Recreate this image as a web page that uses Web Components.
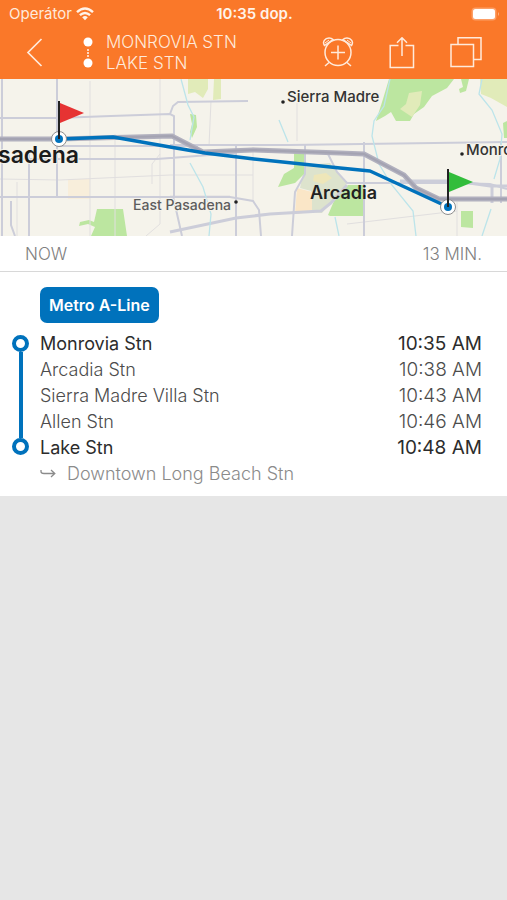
<!DOCTYPE html>
<html lang="en">
<head>
<meta charset="utf-8">
<meta name="viewport" content="width=device-width, initial-scale=1">
<title>Monrovia Stn - Lake Stn</title>
<style>
  :root {
    --color-brand: #fa7829;
    --color-brand-text: #ffeadb;
    --color-line: #0072bc;
    --color-dark: #2c2c2c;
    --color-mid: #4c4c4c;
    --color-muted: #8b8b8b;
    --gutter: 25px;
  }

  body {
    margin: 0;
    min-height: 100vh;
    background: #e6e6e6;
    font-family: Inter, "Liberation Sans", sans-serif;
    font-size: 18px;
    color: var(--color-dark);
  }
</style>
</head>
<body>
<trip-page>
  <status-bar slot="header" carrier="Operátor" time="10:35 dop."></status-bar>
  <nav-bar slot="header" from="MONROVIA STN" to="LAKE STN"></nav-bar>
  <route-map></route-map>
  <trip-summary>
    <span>NOW</span>
    <span slot="duration">13 MIN.</span>
  </trip-summary>
  <trip-leg line="Metro A-Line" direction="Downtown Long Beach Stn">
    <trip-stop time="10:35 AM" terminal>Monrovia Stn</trip-stop>
    <trip-stop time="10:38 AM">Arcadia Stn</trip-stop>
    <trip-stop time="10:43 AM">Sierra Madre Villa Stn</trip-stop>
    <trip-stop time="10:46 AM">Allen Stn</trip-stop>
    <trip-stop time="10:48 AM" terminal>Lake Stn</trip-stop>
  </trip-leg>
</trip-page>

<script>
class TripPage extends HTMLElement {
  constructor() {
    super();
    this.attachShadow({ mode: 'open' });
    this.shadowRoot.innerHTML = `
      <style>
        :host { display: block; }
        header {
          background: var(--color-brand);
          color: var(--color-brand-text);
        }
        main { background: #fff; }
      </style>
      <header><slot name="header"></slot></header>
      <main><slot></slot></main>
    `;
  }
}

class StatusBar extends HTMLElement {
  constructor() {
    super();
    this.attachShadow({ mode: 'open' });
  }

  connectedCallback() {
    this.shadowRoot.innerHTML = `
      <style>
        :host {
          display: grid;
          grid-template-columns: 1fr auto 1fr;
          align-items: center;
          height: 27px;
          padding: 0 7px 0 9px;
          font-size: 15px;
        }
        .carrier { display: flex; align-items: center; gap: 4px; }
        .time { font-weight: 600; color: #fff3e9; }
        .battery { justify-self: end; }
        svg { display: block; }
      </style>
      <div class="carrier">
        <span>${this.getAttribute('carrier')}</span>
        <svg width="18" height="14" viewBox="0 0 18 14" fill="none" stroke="#fff3e9" stroke-width="2.4" aria-hidden="true">
          <path d="M1 5.2Q9-2.2 17 5.2M3.9 8.2Q9 3.6 14.1 8.2"/>
          <path d="M6.2 10.2Q9 7.8 11.8 10.2L9 13.2Z" fill="#fff3e9" stroke="none"/>
        </svg>
      </div>
      <span class="time">${this.getAttribute('time')}</span>
      <svg class="battery" width="29" height="14" viewBox="0 0 29 14" aria-hidden="true">
        <rect x=".5" y=".5" width="25" height="13" rx="4" fill="#fc9f67"/>
        <rect x="2" y="2" width="22" height="10" rx="2.5" fill="#fff"/>
        <path d="M27 5q2 2 0 4Z" fill="#fdb183"/>
      </svg>
    `;
  }
}

class NavBar extends HTMLElement {
  constructor() {
    super();
    this.attachShadow({ mode: 'open' });
  }

  connectedCallback() {
    this.shadowRoot.innerHTML = `
      <style>
        :host {
          display: flex;
          align-items: center;
          height: 52px;
          padding: 0 var(--gutter);
        }
        button {
          padding: 0;
          border: 0;
          background: none;
          color: inherit;
          cursor: pointer;
        }
        svg { display: block; fill: none; stroke: currentColor; }
        .ends { margin: 0 11px 0 38px; fill: #fff; stroke: none; }
        h1 {
          flex: 1;
          margin: 0;
          font-size: 17px;
          font-weight: 300;
          line-height: 21px;
        }
        h1 span { display: block; }
        .actions { display: flex; align-items: center; gap: 32px; }
      </style>
      <button aria-label="Back">
        <svg width="18" height="30" viewBox="0 0 18 30" stroke-width="1.7"><path d="M16.500 1 3 14.500 16.500 28"/></svg>
      </button>
      <svg class="ends" width="14" height="32" viewBox="0 0 14 32" aria-hidden="true">
        <circle cx="7" cy="5" r="4.500"/>
        <circle cx="7" cy="26" r="4.500"/>
        <path d="M6 12h2v2H6zM6 15h2v2H6zM6 18h2v2H6z" fill="#ffd8bf"/>
      </svg>
      <h1><span>${this.getAttribute('from')}</span><span>${this.getAttribute('to')}</span></h1>
      <div class="actions">
        <button aria-label="Add alarm">
          <svg width="32" height="32" viewBox="0 0 32 32" stroke-width="1.500">
            <circle cx="16" cy="15.500" r="13"/>
            <path d="M16 8.500v14M9 15.500h14M7 25.500l-4 3.500M25 25.500l4 3.500"/>
            <path d="M2.500 8.500C0 5 3 1 7 1c2 0 3 .5 4 1.600ZM29.500 8.500C32 5 29 1 25 1c-2 0-3 .5-4 1.600Z"/>
            <path d="M3 6 7 3M29 6l-4-3" stroke-width="1"/>
          </svg>
        </button>
        <button aria-label="Share">
          <svg width="32" height="32" viewBox="0 0 32 32" stroke-width="1.500">
            <path d="M12.500 8.500H4.200V30.500H27.500V8.500H19.500M16 19V.8M11 5.800l5-5 5 5"/>
          </svg>
        </button>
        <button aria-label="Copy">
          <svg width="32" height="32" viewBox="0 0 32 32" stroke-width="1.500">
            <path d="M1 7.500H23.500V29.500H1ZM8 7.500V.8H31V22.500H23.500"/>
          </svg>
        </button>
      </div>
    `;
  }
}

class RouteMap extends HTMLElement {
  constructor() {
    super();
    this.attachShadow({ mode: 'open' });
    this.shadowRoot.innerHTML = `
      <style>
        :host { display: block; background: #f5f3eb; }
        svg { display: block; width: 100%; height: 157px; }
        .road { fill: none; stroke: #cccdd9; stroke-width: 2; }
        .road.wide { stroke-width: 3; }
        .street { fill: none; stroke: #e1dfdf; stroke-width: 1; }
        .highway { fill: none; stroke: #b1b0be; stroke-width: 5; }
        .highway-core { fill: none; stroke: #a4a3b2; stroke-width: 2; }
        .creek { fill: none; stroke: #bce4ea; stroke-width: 1.3; }
        .park { fill: #bce6a0; }
        .meadow { fill: #e1ebb9; }
        .route { fill: none; stroke: var(--color-line); stroke-width: 3.5; stroke-linejoin: round; }
        .halo { paint-order: stroke; stroke: #f5f3eb; stroke-width: 2px; stroke-linejoin: round; }
        .town { font-size: 15px; font-weight: 500; fill: #333; }
        .small { font-size: 14px; font-weight: 500; fill: #5d5d5d; }
        .city { font-size: 18px; font-weight: 600; fill: #222; stroke: none; }
        .big { font-size: 23px; font-weight: 600; fill: #1b1b1b; }
      </style>
      <svg viewBox="0 0 507 157" preserveAspectRatio="xMidYMid slice" role="img" aria-label="Map of the route">
        <!-- parks and built-up areas -->
        <path d="M68 100h22v20H68z" fill="#f8eedb"/>
        <path class="park" d="M97 130h26l4 27H91l4-9-7-3-9 2 1-4 9-2 5 2Z"/>
        <path class="meadow" d="M188 0h20v10l-5 9-8-6-7 2ZM214 0h7v20l-8 1Z"/>
        <path class="park" d="M190 35l6 1 1 12-5 11-2-6 2-8Z"/>
        <path d="M305 86l25-2 17 20-25 30-10-1-1-21-11-3Z" fill="#dde3cd"/>
        <path d="M297 109l15 4v20l-17 2Z" fill="#fae6c7"/>
        <path d="M314 96l12-2 6 5-9 6-10-3Z" fill="#eee6b9"/>
        <path class="park" d="M294 74h11l-1 21-9 9-17 4 6-13 10-6ZM328 136l6-14 14-16h15v31h-33Z"/>
        <path class="park" d="M389 0h65l-7 9-15 8-8 11-10 7-4 7h-14l-5-9-6 4-9 5 7-22ZM461 0h8l-3 12-6 2-1-4 4-2ZM461 132h12v17l-12-1Z"/>
        <path class="meadow" d="M409 14l13-2-2 14-8 12-12-8 6-5ZM480 0h27v28l-16-9-10-4Z"/>
        <path class="park" d="M507 42l-4 2 1 15h3Z"/>

        <!-- streets -->
        <path class="street" d="M90 2v155M115 55v102M160 0v145l-14 12M211 22l-2 45M253 68v54M297 24v38M0 100l60 1 110-5h83M17 103v54M457 123v34M347 145l110-13M170 117h60M152 105v-20l8-10"/>
        <!-- main roads -->
        <path class="road" d="M2 0v157M57 0v119M29 72v85M0 39h57l54-2 59-2 4 2v80M0 80h157l79-6M60 67h138M236 65v92M0 118h230l23 4 6 9 2 26M170 66h119l218-3"/>
        <path class="road" d="M170 35l3-8 5-4 70-1M173 117l9 40M305 65v30l-10 18-3 44M328 75l9 18 10 11h108l35 1 17 5M364 63v94M501 62v62M11 122v24l4 11"/>
        <path class="road wide" d="M170 153l66-14 34-4 51-3 10-8 16-18"/>
        <path class="road wide" d="M400 102h55l35 5h17M492 106v18"/>
        <!-- creeks -->
        <path class="creek" d="M181 0l7 26 6 12-4 23M190 84l13 24 8 27-2 22M279 41l9 22M390 0l-6 27-10 15-2 15 7 28 12 20 22 27 3 25M482 0l-3 15 13 16 10 24-2 25-6 20M491 130l-9 27M335 138l4 19"/>
        <!-- freeway -->
        <path class="highway" d="M0 60h59l113-3 31 16 50-2 87 3 24 1 40 21 12 13 23 11h68"/>
        <path class="highway-core" d="M0 60h59l113-3 31 16 50-2 87 3 24 1 40 21 12 13 23 11h68"/>

        <path class="route" d="M59 60l54-2 57 10 35 6 49 6 86 9 30 3 78 36"/>

        <!-- place names -->
        <g class="halo">
          <text class="big" x="-2" y="84">sadena</text>
          <text class="town" x="287" y="23">Sierra Madre</text>
          <text class="small" x="133" y="131">East Pasadena</text>
          <text class="city" x="310" y="120">Arcadia</text>
          <text class="town" x="466" y="76">Monrovia</text>
        </g>
        <g fill="#222">
          <circle cx="283" cy="23" r="1.800"/>
          <circle cx="236" cy="123" r="1.800"/>
          <circle cx="462" cy="75" r="1.800"/>
        </g>

        <!-- end points with their flags -->
        <g stroke="#8d8d8d" fill="#fff">
          <circle cx="59" cy="60" r="7.500"/>
          <circle cx="448" cy="128" r="7.500"/>
        </g>
        <g fill="#0072bc">
          <circle cx="59" cy="60" r="4"/>
          <circle cx="448" cy="128" r="4"/>
        </g>
        <path d="M59 22v38M448 90v38" stroke="#222" stroke-width="2"/>
        <path d="M60 24l24 10-24 10Z" fill="#e63333"/>
        <path d="M449 93l24 10-24 10Z" fill="#32bd3b"/>
      </svg>
    `;
  }
}

class TripSummary extends HTMLElement {
  constructor() {
    super();
    this.attachShadow({ mode: 'open' });
    this.shadowRoot.innerHTML = `
      <style>
        :host {
          display: flex;
          align-items: center;
          justify-content: space-between;
          height: 35px;
          padding: 0 var(--gutter);
          border-bottom: 1px solid #d8d8d8;
          color: #808080;
          font-size: 17px;
          font-weight: 300;
        }
      </style>
      <slot></slot>
      <slot name="duration"></slot>
    `;
  }
}

class TripLeg extends HTMLElement {
  constructor() {
    super();
    this.attachShadow({ mode: 'open' });
  }

  connectedCallback() {
    this.shadowRoot.innerHTML = `
      <style>
        :host {
          display: block;
          padding: 15px var(--gutter) 9px 12px;
        }
        .badge {
          display: inline-block;
          margin: 0 0 8px 28px;
          padding: 0 9px;
          border-radius: 7px;
          background: var(--color-line);
          color: #fff;
          font-size: 16px;
          font-weight: 600;
          line-height: 36px;
        }
        .stops {
          display: grid;
          grid-template-columns: 17px 1fr;
          column-gap: 11px;
        }
        /* the line runs from the first ring to the last one */
        .track {
          display: flex;
          flex-direction: column;
          align-items: center;
          padding: 4px 0 6px;
        }
        .ring {
          box-sizing: border-box;
          width: 17px;
          height: 17px;
          border: 4px solid var(--color-line);
          border-radius: 50%;
        }
        .rail {
          flex: 1;
          width: 4px;
          background: var(--color-line);
        }
        .direction {
          display: flex;
          align-items: center;
          gap: 11px;
          margin-left: 28px;
          color: var(--color-muted);
          font-weight: 300;
          line-height: 26px;
        }
        svg { fill: none; stroke: currentColor; stroke-width: 1.3; }
      </style>
      <div class="badge">${this.getAttribute('line')}</div>
      <div class="stops">
        <div class="track">
          <div class="ring"></div>
          <div class="rail"></div>
          <div class="ring"></div>
        </div>
        <div><slot></slot></div>
      </div>
      <div class="direction">
        <svg width="16" height="12" viewBox="0 0 16 12" aria-hidden="true">
          <path d="M1 2v1.500Q1 5.500 4 5.500h11M11 2l3.800 3.500L11 9"/>
        </svg>
        <span>${this.getAttribute('direction')}</span>
      </div>
    `;
  }
}

class TripStop extends HTMLElement {
  constructor() {
    super();
    this.attachShadow({ mode: 'open' });
  }

  connectedCallback() {
    this.shadowRoot.innerHTML = `
      <style>
        :host {
          display: flex;
          justify-content: space-between;
          color: var(--color-mid);
          font-weight: 300;
          line-height: 26px;
        }
        :host([terminal]) {
          color: var(--color-dark);
          font-weight: 400;
        }
        time { font-size: 19px; }
      </style>
      <slot></slot>
      <time>${this.getAttribute('time')}</time>
    `;
  }
}

customElements.define('trip-page', TripPage);
customElements.define('status-bar', StatusBar);
customElements.define('nav-bar', NavBar);
customElements.define('route-map', RouteMap);
customElements.define('trip-summary', TripSummary);
customElements.define('trip-leg', TripLeg);
customElements.define('trip-stop', TripStop);
</script>
</body>
</html>
